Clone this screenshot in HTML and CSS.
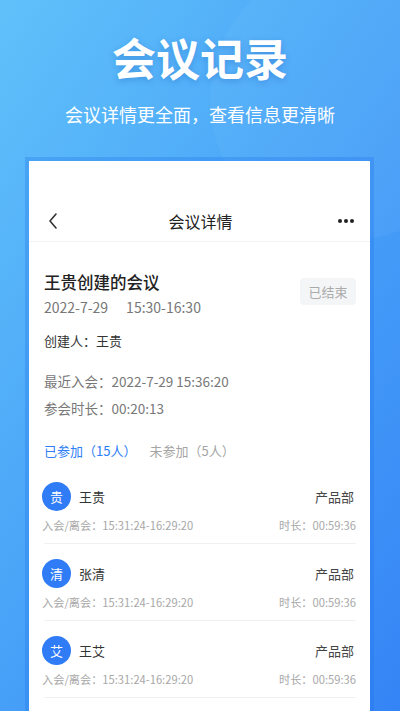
FILE: index.html
```html
<!DOCTYPE html>
<html lang="zh-CN">
<head>
<meta charset="UTF-8">
<meta name="viewport" content="width=device-width, initial-scale=1.0">
<title>会议记录</title>
<link rel="stylesheet" href="styles.css">
</head>
<body>

<div class="page">
<div class="glow"></div>

<div class="hero">
<h1>会议记录</h1>
<p>会议详情更全面，查看信息更清晰</p>
</div>

<div class="frame">
<div class="card">

<div class="nav">
<svg class="back" width="12" height="18" viewBox="0 0 12 18"><polyline points="9,2 3,9 9,16" fill="none" stroke="#333" stroke-width="1.6" stroke-linecap="round" stroke-linejoin="round"/></svg>
<div class="nav-title">会议详情</div>
<svg class="more" width="16" height="6" viewBox="0 0 16 6"><circle cx="2" cy="3" r="2" fill="#222"/><circle cx="8" cy="3" r="2" fill="#222"/><circle cx="14" cy="3" r="2" fill="#222"/></svg>
</div>

<div class="content">
<div class="meeting-head">
<div>
<div class="meeting-title">王贵创建的会议</div>
<div class="meeting-time">2022-7-29<span class="hours">15:30-16:30</span></div>
</div>
<div class="status">已结束</div>
</div>

<div class="creator">创建人：王贵</div>
<div class="info first">最近入会：2022-7-29 15:36:20</div>
<div class="info">参会时长：00:20:13</div>

<div class="tabs">
<span class="tab active">已参加（15人）</span>
<span class="tab">未参加（5人）</span>
</div>

<div class="list">
<div class="row">
<div class="row-top">
<div class="avatar">贵</div>
<div class="name">王贵</div>
<div class="dept">产品部</div>
</div>
<div class="row-bottom">
<span>入会/离会：15:31:24-16:29:20</span>
<span>时长：00:59:36</span>
</div>
</div>
<div class="row">
<div class="row-top">
<div class="avatar">清</div>
<div class="name">张清</div>
<div class="dept">产品部</div>
</div>
<div class="row-bottom">
<span>入会/离会：15:31:24-16:29:20</span>
<span>时长：00:59:36</span>
</div>
</div>
<div class="row">
<div class="row-top">
<div class="avatar">艾</div>
<div class="name">王艾</div>
<div class="dept">产品部</div>
</div>
<div class="row-bottom">
<span>入会/离会：15:31:24-16:29:20</span>
<span>时长：00:59:36</span>
</div>
</div>
</div>
</div>

</div>
</div>
</div>

</body>
</html>
```

FILE: styles.css
```css
body {
margin: 0;
font-family: "Noto Sans CJK SC", "Noto Sans", sans-serif;
}
.page {
position: relative;
height: 711px;
overflow: hidden;
background: linear-gradient(125deg, #60c1fa 0%, #4ba6f8 45%, #3584f6 100%);
}
.glow {
position: absolute;
left: 210px;
top: -40px;
width: 280px;
height: 280px;
border-radius: 50%;
background: rgba(255, 255, 255, 0.04);
}
.hero {
position: relative;
text-align: center;
color: #fff;
padding-top: 31px;
}
.hero h1 {
margin: 0;
font-size: 44px;
line-height: 52px;
font-weight: 700;
text-shadow: 0 2px 6px rgba(0, 60, 160, 0.25);
}
.hero p {
margin: 19px 0 0;
font-size: 18px;
line-height: 24px;
}
.frame {
position: relative;
margin: 31px 0 0 25px;
width: 341px;
border: 4px solid rgba(30, 110, 235, 0.28);
border-bottom: none;
}
.card {
background: #fff;
padding-top: 40px;
height: 600px;
}
.nav {
display: flex;
align-items: center;
justify-content: space-between;
height: 40px;
padding: 0 16px 0 18px;
border-bottom: 1px solid #f2f2f2;
}
.nav-title {
font-size: 16px;
color: #222;
margin-left: 4px;
}
.content {
padding: 0 14px 0 15px;
}
.meeting-head {
display: flex;
justify-content: space-between;
align-items: flex-start;
margin-top: 28px;
}
.meeting-title {
font-size: 16.5px;
line-height: 24px;
color: #222;
font-weight: 500;
}
.meeting-time {
margin-top: 3px;
font-size: 14px;
line-height: 20px;
color: #777;
}
.hours {
margin-left: 18px;
}
.status {
margin-top: 8px;
width: 56px;
height: 27px;
line-height: 27px;
text-align: center;
background: #f4f5f7;
border-radius: 4px;
font-size: 13px;
color: #aaa;
}
.creator {
margin-top: 14px;
font-size: 13px;
line-height: 20px;
color: #333;
}
.info {
margin-top: 7px;
font-size: 13.5px;
line-height: 20px;
color: #777;
}
.info.first {
margin-top: 20px;
}
.tabs {
margin-top: 23px;
font-size: 13px;
line-height: 20px;
display: flex;
gap: 13px;
}
.tab {
color: #a5a5a5;
}
.tab.active {
color: #2e7ef6;
}
.list {
margin-top: 6px;
}
.row {
padding: 15px 0 9px;
border-bottom: 1px solid #f0f0f0;
}
.row-top {
display: flex;
align-items: center;
height: 29px;
margin-left: -2px;
}
.avatar {
width: 29px;
height: 29px;
border-radius: 50%;
background: #2f7cf6;
color: #fff;
font-size: 13px;
line-height: 29px;
text-align: center;
}
.name {
margin-left: 8px;
font-size: 13px;
color: #333;
}
.dept {
margin-left: auto;
margin-right: 2px;
font-size: 13px;
color: #444;
}
.row-bottom {
display: flex;
justify-content: space-between;
margin: 5px 0 0 -2px;
font-size: 11.2px;
line-height: 18px;
color: #a8a8a8;
}
```
